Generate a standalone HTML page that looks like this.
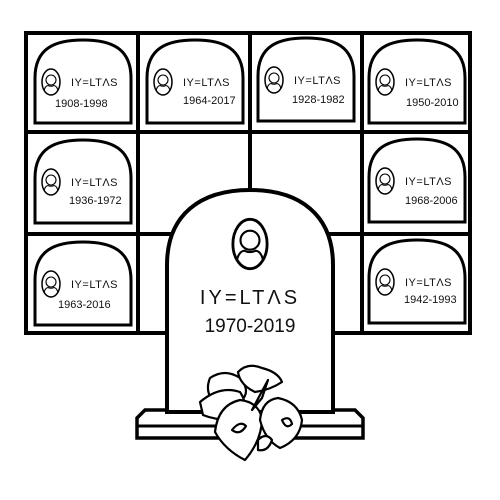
<!DOCTYPE html>
<html><head><meta charset="utf-8"><style>
html,body{margin:0;padding:0;background:#fff;width:500px;height:500px;overflow:hidden}
svg{display:block}
text{font-family:"Liberation Sans","DejaVu Sans",sans-serif;fill:#111}
</style></head><body>
<svg width="500" height="500" viewBox="0 0 500 500" xmlns="http://www.w3.org/2000/svg">
<defs>
<g id="face">
<ellipse cx="0" cy="0" rx="9" ry="13" fill="#fff" stroke="#000" stroke-width="1.5"/>
<circle cx="0" cy="-2" r="5" fill="none" stroke="#000" stroke-width="1.1"/>
<path d="M-7,9 Q-6,4 -3,3.5 Q0,5 3,3.5 Q6,4 7,9" fill="none" stroke="#000" stroke-width="1.1"/>
</g>
<g id="sg">
<path d="M0,85 L0,40 C0,10 20,2 48,2 C76,2 96,10 96,40 L96,85 Z" fill="#fff" stroke="#000" stroke-width="3"/>
<use href="#face" x="16" y="44"/>
<text x="36" y="48" font-size="11" letter-spacing="0.5">IY=LTΛS</text>
</g>
</defs>
<g fill="none" stroke="#000" stroke-width="4">
<rect x="26" y="33" width="444" height="300"/>
<line x1="138" y1="33" x2="138" y2="333"/>
<line x1="250" y1="33" x2="250" y2="333"/>
<line x1="362" y1="33" x2="362" y2="333"/>
<line x1="26" y1="132" x2="470" y2="132"/>
<line x1="26" y1="234" x2="470" y2="234"/>
</g>
<g><use href="#sg" x="35" y="38"/><text x="55" y="107" font-size="11">1908-1998</text></g>
<g><use href="#sg" x="147" y="38"/><text x="183" y="104" font-size="11">1964-2017</text></g>
<g><use href="#sg" x="258" y="36"/><text x="292" y="103" font-size="11">1928-1982</text></g>
<g><use href="#sg" x="369" y="38"/><text x="406" y="106" font-size="11">1950-2010</text></g>
<g><use href="#sg" x="35" y="138"/><text x="69" y="204" font-size="11">1936-1972</text></g>
<g><use href="#sg" x="369" y="137"/><text x="405" y="204" font-size="11">1968-2006</text></g>
<g><use href="#sg" x="35" y="240"/><text x="58" y="308" font-size="11">1963-2016</text></g>
<g><use href="#sg" x="369" y="238"/><text x="404" y="303" font-size="11">1942-1993</text></g>
<path d="M145,410 L355,410 L363,418 L363,438 L137,438 L137,418 Z" fill="#fff" stroke="#000" stroke-width="3.5"/>
<line x1="137" y1="426" x2="363" y2="426" stroke="#000" stroke-width="3"/>
<path d="M167,412 L167,265 C167,215 200,190 250,190 C300,190 333,215 333,265 L333,412 Z" fill="#fff" stroke="#000" stroke-width="4"/>
<g transform="translate(250,244) scale(1.9)"><use href="#face"/></g>
<text x="250" y="304" font-size="20" text-anchor="middle" letter-spacing="3">IY=LTΛS</text>
<text x="250" y="332" font-size="19" text-anchor="middle">1970-2019</text>
<g fill="#fff" stroke="#000" stroke-width="2.2" stroke-linejoin="round">
<path d="M210,378 Q225,368 240,378 Q252,392 240,402 Q225,405 212,400 Q205,390 210,378 Z"/>
<path d="M200,402 Q220,385 240,392 Q252,410 232,420 Q215,420 203,415 Z"/>
<path d="M238,372 Q248,362 262,368 Q278,372 282,382 Q270,390 255,392 Q240,385 238,372 Z"/>
<path d="M215,432 Q218,405 240,400 Q258,402 262,418 Q262,440 245,460 Q225,450 215,432 Z"/>
<path d="M260,420 Q262,400 278,398 Q298,402 302,420 Q300,440 280,448 Q265,440 260,420 Z"/>
<path d="M252,410 L268,380 L262,398 Z"/>
<path d="M232,430 Q240,420 246,426 Q240,436 232,430 Z"/>
<path d="M282,420 Q290,415 292,424 Q286,430 282,420 Z"/>
<path d="M258,440 Q266,432 272,440 Q268,452 258,450 Z"/>
</g>
</svg>
</body></html>
